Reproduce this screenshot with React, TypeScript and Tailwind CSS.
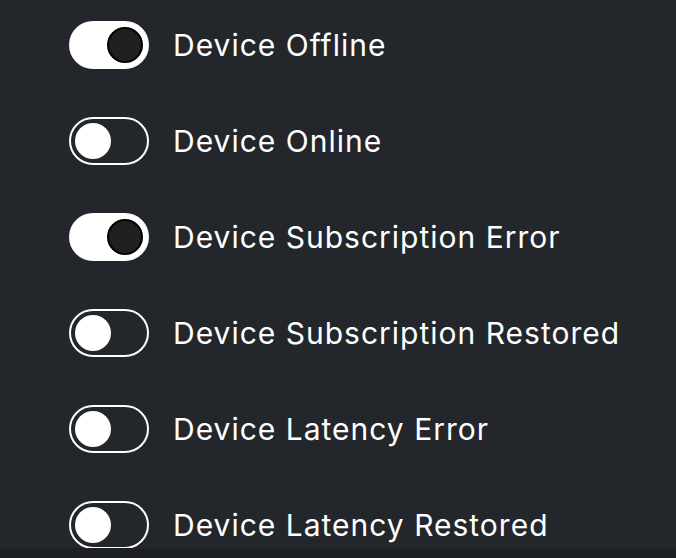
const items = [
  { label: "Device Offline", on: true },
  { label: "Device Online", on: false },
  { label: "Device Subscription Error", on: true },
  { label: "Device Subscription Restored", on: false },
  { label: "Device Latency Error", on: false },
  { label: "Device Latency Restored", on: false },
];

function Toggle({ on }: { on: boolean }) {
  return on ? (
    <div className="flex h-12 w-20 shrink-0 items-center justify-end rounded-full bg-white px-1.5">
      <div className="h-9 w-9 rounded-full border-2 border-black bg-[#202020]" />
    </div>
  ) : (
    <div className="flex h-12 w-20 shrink-0 items-center rounded-full border-2 border-white px-1">
      <div className="h-9 w-9 rounded-full bg-white" />
    </div>
  );
}

export default function App() {
  return (
    <div className="flex h-[558px] w-[676px] flex-col bg-[#1e2024] font-['Inter',sans-serif]">
      <div className="flex h-[548px] flex-col gap-12 overflow-hidden bg-[#23262b] pl-[69px] pt-[21px]">
        {items.map((it) => (
          <div key={it.label} className="flex h-12 items-center gap-6">
            <Toggle on={it.on} />
            <span className="text-[30px] leading-none tracking-[1px] text-white">{it.label}</span>
          </div>
        ))}
      </div>
    </div>
  );
}
